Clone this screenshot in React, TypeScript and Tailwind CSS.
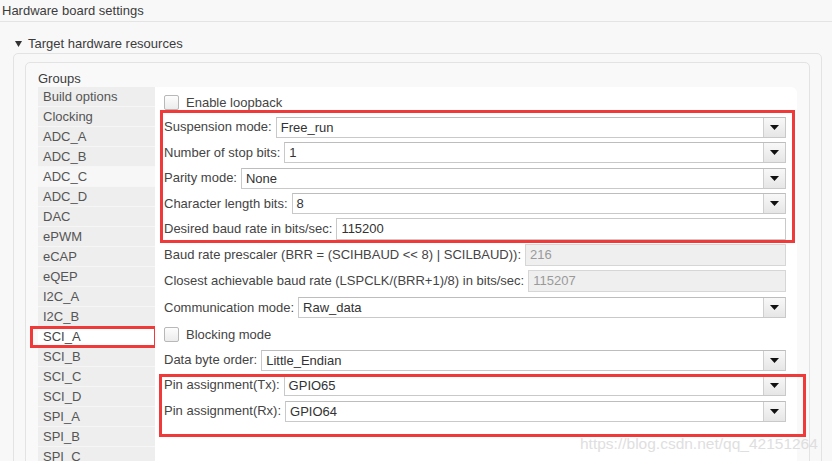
const groups = [
  'Build options',
  'Clocking',
  'ADC_A',
  'ADC_B',
  'ADC_C',
  'ADC_D',
  'DAC',
  'ePWM',
  'eCAP',
  'eQEP',
  'I2C_A',
  'I2C_B',
  'SCI_A',
  'SCI_B',
  'SCI_C',
  'SCI_D',
  'SPI_A',
  'SPI_B',
  'SPI_C',
];

function Arrow() {
  return (
    <div className="flex w-[22px] items-center justify-center border-l border-[#cfcfcf] bg-gradient-to-b from-[#f8f8f8] to-[#e6e6e6]">
      <svg width="9" height="5" viewBox="0 0 9 5">
        <path d="M0 0h9L4.5 5z" fill="#111" />
      </svg>
    </div>
  );
}

function Combo({ value }: { value: string }) {
  return (
    <div className="flex h-[21px] flex-1 border border-[#c9c9c9] border-t-[#bdbdbd] bg-white">
      <span className="flex-1 pl-[4px] leading-[19px] text-[#333]">{value}</span>
      <Arrow />
    </div>
  );
}

function TextBox({ value, disabled }: { value: string; disabled?: boolean }) {
  return (
    <div
      className={
        disabled
          ? 'h-[22px] flex-1 border border-[#d6d6d6] bg-[#efefef] pl-[4px] leading-[20px] text-[#9a9a9a]'
          : 'h-[22px] flex-1 border border-[#c9c9c9] bg-white pl-[4px] leading-[20px] text-[#333]'
      }
    >
      {value}
    </div>
  );
}

function Row({ label, h, children }: { label: string; h: string; children: React.ReactNode }) {
  return (
    <div className={`flex items-center gap-[4px] ${h}`}>
      <span className="whitespace-nowrap">{label}</span>
      {children}
    </div>
  );
}

function Check({ label, h }: { label: string; h: string }) {
  return (
    <div className={`flex items-center gap-[7px] ${h}`}>
      <span className="h-[15px] w-[15px] rounded-[2px] border border-[#b8b8b8] bg-gradient-to-b from-[#fdfdfd] to-[#ececec]" />
      <span>{label}</span>
    </div>
  );
}

export default function App() {
  return (
    <div className="relative h-[461px] w-[832px] overflow-hidden bg-[#f8f8f8] font-['Liberation_Sans',Arial,sans-serif] text-[13px] text-[#444]">
      {/* header */}
      <div className="h-[22px] border-b border-[#e4e4e4] pl-[2px] leading-[22px] text-[#3c3c3c]">
        Hardware board settings
      </div>
      <div className="flex h-[31px] items-center gap-[6px] pl-[15px] pt-[12px] text-[#3c3c3c]">
        <svg width="7" height="6" viewBox="0 0 7 6">
          <path d="M0 0h7L3.5 6z" fill="#333" />
        </svg>
        <span>Target hardware resources</span>
      </div>

      {/* outer panel */}
      <div className="ml-[13px] mr-[10px] h-[600px] rounded-[5px] border border-[#e3e3e3] bg-[#f8f8f8] pt-[8px]">
        {/* inner panel */}
        <div className="ml-[11px] mr-[11px] h-[560px] rounded-[5px] border border-[#e3e3e3] bg-[#f9f9f9] px-[12px]">
          <div className="h-[24px] pt-[8px] leading-[15px] text-[#3c3c3c]">Groups</div>
          <div className="flex">
            {/* group list */}
            <div className="w-[117px] shrink-0">
              {groups.map((g) => (
                <div
                  key={g}
                  className={
                    g === 'SCI_A'
                      ? 'relative h-[20px] border-b border-[#f6f6f6] bg-white pl-[5px] leading-[19px] text-[#444]'
                      : g === 'ADC_C'
                        ? 'h-[20px] border-b border-[#f6f6f6] bg-[#f7f7f7] pl-[5px] leading-[19px] text-[#555]'
                        : 'h-[20px] border-b border-[#f6f6f6] bg-[#eeeeee] pl-[5px] leading-[19px] text-[#555]'
                  }
                >
                  {g}
                  {g === 'SCI_A' && (
                    <span className="absolute -bottom-[2px] -left-[8px] -right-[2px] -top-[1px] border-[3px] border-[#f03a3a]" />
                  )}
                </div>
              ))}
            </div>

            {/* settings panel */}
            <div className="relative h-[420px] flex-1 rounded-tr-[6px] bg-white pl-[9px] pr-[11px] pt-[4px]">
              <Check label="Enable loopback" h="h-[23px]" />

              <div className="relative">
                <Row label="Suspension mode:" h="h-[26px]">
                  <Combo value="Free_run" />
                </Row>
                <Row label="Number of stop bits:" h="h-[25px]">
                  <Combo value="1" />
                </Row>
                <Row label="Parity mode:" h="h-[26px]">
                  <Combo value="None" />
                </Row>
                <Row label="Character length bits:" h="h-[25px]">
                  <Combo value="8" />
                </Row>
                <Row label="Desired baud rate in bits/sec:" h="h-[26px]">
                  <TextBox value="115200" />
                </Row>
                <span className="absolute -bottom-[1px] -left-[4px] -right-[9px] -top-[4px] border-[3px] border-[#f03a3a]" />
              </div>

              <Row label="Baud rate prescaler (BRR = (SCIHBAUD << 8) | SCILBAUD)):" h="h-[26px]">
                <TextBox value="216" disabled />
              </Row>
              <Row label="Closest achievable baud rate (LSPCLK/(BRR+1)/8) in bits/sec:" h="h-[26px]">
                <TextBox value="115207" disabled />
              </Row>
              <Row label="Communication mode:" h="h-[27px]">
                <Combo value="Raw_data" />
              </Row>
              <Check label="Blocking mode" h="h-[27px]" />
              <Row label="Data byte order:" h="h-[24px]">
                <Combo value="Little_Endian" />
              </Row>

              <div className="relative">
                <Row label="Pin assignment(Tx):" h="h-[26px]">
                  <Combo value="GPIO65" />
                </Row>
                <Row label="Pin assignment(Rx):" h="h-[26px]">
                  <Combo value="GPIO64" />
                </Row>
                <span className="absolute -bottom-[13px] -left-[5px] -right-[20px] top-[2px] border-[3px] border-[#f03a3a]" />
              </div>
            </div>
          </div>
        </div>
      </div>

      {/* watermark */}
      <span className="absolute left-[580px] top-[432px] text-[15.5px] text-[#dcdcdc] opacity-90">
        https://blog.csdn.net/qq_42151264
      </span>
    </div>
  );
}
